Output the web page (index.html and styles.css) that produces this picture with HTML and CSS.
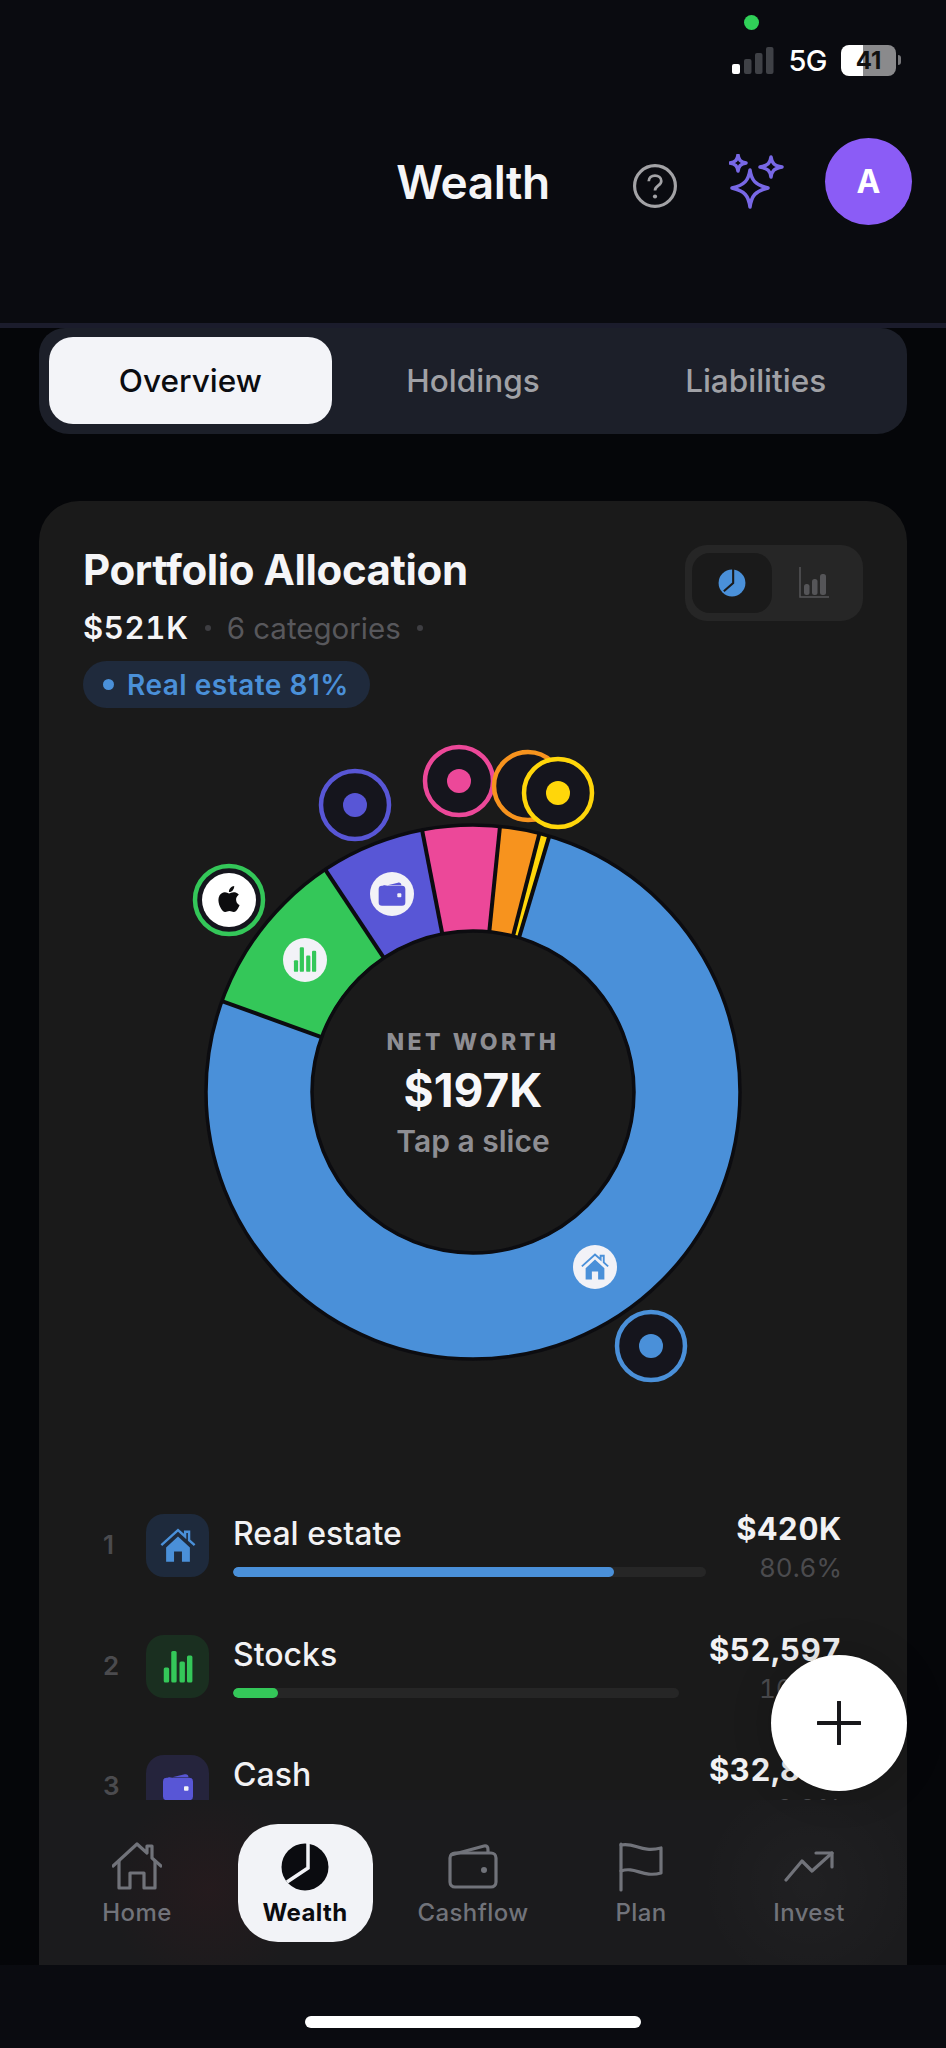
FILE: index.html
```html
<!DOCTYPE html>
<html lang="en">
<head>
    <meta charset="UTF-8">
    <meta name="viewport" content="width=device-width, initial-scale=1.0">
    <title>Wealth</title>
    <link rel="stylesheet" href="styles.css">
</head>
<body>
    <svg class="icon-defs" width="0" height="0" aria-hidden="true">
        <symbol id="i-house" viewBox="0 0 24 24">
            <path d="M1.500 11.500 12 2l4.500 4V3H19v5.300l3.500 3.200" fill="none" stroke="currentColor" stroke-width="1.500"/>
            <path d="M4.500 13 12 6l7.500 7v9h-5v-6.500h-5V22h-5z" fill="currentColor"/>
        </symbol>
        <symbol id="i-bars" viewBox="0 0 24 24">
            <rect x="2.500" y="13" width="3.600" height="10" rx="1" fill="currentColor"/>
            <rect x="7.500" y="2" width="3.600" height="21" rx="1" fill="currentColor"/>
            <rect x="13" y="9" width="3.600" height="14" rx="1" fill="currentColor"/>
            <rect x="18" y="5" width="3.600" height="18" rx="1" fill="currentColor"/>
        </symbol>
        <symbol id="i-wallet" viewBox="0 0 24 24">
            <path d="M4 6.500 16.500 3.500c1.500-.3 2.500.5 2.500 2H6z" fill="currentColor"/>
            <path d="M4.500 5.800h15a2.500 2.500 0 0 1 2.500 2.500v10a2.500 2.500 0 0 1-2.500 2.500h-15A2.500 2.500 0 0 1 2 18.300v-10a2.500 2.500 0 0 1 2.500-2.500z" fill="currentColor"/>
            <rect x="16" y="11.500" width="3" height="3" rx=".6" fill="#f2f2f7"/>
        </symbol>
        <symbol id="i-apple" viewBox="0 0 24 24">
            <path d="M12.152 6.896c-.948 0-2.415-1.078-3.96-1.04-2.04.027-3.91 1.183-4.961 3.014-2.117 3.675-.546 9.103 1.519 12.09 1.013 1.454 2.208 3.09 3.792 3.039 1.52-.065 2.09-.987 3.935-.987 1.831 0 2.35.987 3.96.948 1.637-.026 2.676-1.48 3.676-2.948 1.156-1.688 1.636-3.325 1.662-3.415-.039-.013-3.182-1.221-3.22-4.857-.026-3.04 2.48-4.494 2.597-4.559-1.429-2.09-3.623-2.324-4.39-2.376-2-.156-3.675 1.09-4.61 1.09zM15.53 3.83c.843-1.012 1.4-2.427 1.245-3.83-1.207.052-2.662.805-3.532 1.818-.78.896-1.454 2.338-1.273 3.714 1.338.104 2.715-.688 3.559-1.701" fill="currentColor"/>
        </symbol>
    </svg>

    <div class="top">
        <div class="status-bar">
            <span class="camera-dot"></span>
            <svg class="signal" width="42" height="27" viewBox="0 0 42 27">
                <rect x="0" y="17" width="8" height="10" rx="2" fill="#fff"/>
                <rect x="12" y="12" width="7.500" height="15" rx="2" fill="#3f4146"/>
                <rect x="23" y="6" width="7.500" height="21" rx="2" fill="#3f4146"/>
                <rect x="34" y="0" width="7.500" height="27" rx="2" fill="#3f4146"/>
            </svg>
            <span class="network">5G</span>
            <span class="battery">41</span>
        </div>
        <div class="app-header">
            <h1 class="page-title">Wealth</h1>
            <div class="header-actions">
                <svg class="help-icon" width="44" height="44" viewBox="0 0 42 42" fill="none">
                    <circle cx="21" cy="21" r="19.500" stroke="#a3a3a6" stroke-width="3"/>
                    <path d="M15 16.500c0-3.500 2.700-5.500 6-5.500s6 2.100 6 5.200c0 4.400-6 4.600-6 9" stroke="#a3a3a6" stroke-width="2.600"/>
                    <circle cx="21" cy="31" r="2" fill="#a3a3a6"/>
                </svg>
                <svg class="sparkles" width="56" height="56" viewBox="0 0 56 56" fill="none" stroke="#7868e6" stroke-width="3.500" stroke-linejoin="round">
                    <path d="M21 16c1.500 10 5 15 18 18-13 3-16.500 8-18 19-1.500-11-5-16-18-19 13-3 16.500-8 18-18z"/>
                    <path d="M9 1c.7 5 2.500 7 8 8-5.500 1-7.300 3-8 8-.7-5-2.500-7-8-8 5.500-1 7.300-3 8-8z"/>
                    <path d="M42 3c.8 6 3 8.500 11 10-8 1.500-10.200 4-11 10-.8-6-3-8.500-11-10 8-1.500 10.200-4 11-10z"/>
                </svg>
                <div class="avatar">A</div>
            </div>
        </div>
    </div>

    <div class="tabs">
        <div class="tab active">Overview</div>
        <div class="tab">Holdings</div>
        <div class="tab">Liabilities</div>
    </div>

    <div class="card">
        <div class="card-body">
            <div class="card-head">
                <div>
                    <h2 class="card-title">Portfolio Allocation</h2>
                    <div class="card-meta">
                        <strong>$521K</strong>
                        <span class="meta-dot"></span>
                        <span>6 categories</span>
                        <span class="meta-dot"></span>
                    </div>
                    <div class="top-pill"><span class="pill-dot"></span>Real estate 81%</div>
                </div>
                <div class="view-toggle">
                    <div class="toggle-btn active">
                        <svg width="28" height="28" viewBox="0 0 24 24">
                            <circle cx="12" cy="12" r="11.500" fill="#4a90d9"/>
                            <path d="M13 0V12L5 19" fill="none" stroke="#1a1a1a" stroke-width="1.800"/>
                        </svg>
                    </div>
                    <div class="toggle-btn">
                        <svg width="30" height="32" viewBox="0 0 30 32" fill="#555558">
                            <path d="M1 0v30h29" fill="none" stroke="#555558" stroke-width="1.500"/>
                            <rect x="5" y="17" width="5.500" height="11" rx="2.500"/>
                            <rect x="13" y="12" width="5.500" height="16" rx="2.500"/>
                            <rect x="21" y="7" width="6" height="21" rx="2.500"/>
                        </svg>
                    </div>
                </div>
            </div>

            <div class="chart">
                <svg class="donut" width="868" height="670" viewBox="39 730 868 670">
                    <g transform="translate(473 1092)">
                        <g transform="rotate(-90)" fill="none" stroke-width="105">
                            <circle class="slice-blue" r="214.500" pathLength="360" stroke-dasharray="273.300 360" transform="rotate(16.600)"/>
                            <circle class="slice-green" r="214.500" pathLength="360" stroke-dasharray="36.500 360" transform="rotate(289.900)"/>
                            <circle class="slice-indigo" r="214.500" pathLength="360" stroke-dasharray="22.600 360" transform="rotate(326.400)"/>
                            <circle class="slice-pink" r="214.500" pathLength="360" stroke-dasharray="16.800 360" transform="rotate(349)"/>
                            <circle class="slice-orange" r="214.500" pathLength="360" stroke-dasharray="8.600 360" transform="rotate(5.800)"/>
                            <circle class="slice-yellow" r="214.500" pathLength="360" stroke-dasharray="2.200 360" transform="rotate(14.400)"/>
                        </g>
                        <circle class="donut-edge" r="267"/>
                        <circle class="donut-edge" r="161"/>
                        <line class="donut-gap" y1="-162" y2="-267" transform="rotate(16.600)"/>
                        <line class="donut-gap" y1="-162" y2="-267" transform="rotate(14.400)"/>
                        <line class="donut-gap" y1="-162" y2="-267" transform="rotate(5.800)"/>
                        <line class="donut-gap" y1="-162" y2="-267" transform="rotate(-11)"/>
                        <line class="donut-gap" y1="-162" y2="-267" transform="rotate(-33.600)"/>
                        <line class="donut-gap" y1="-162" y2="-267" transform="rotate(-70.100)"/>
                    </g>

                    <circle class="slice-badge" cx="595" cy="1267" r="22"/>
                    <use class="fill-blue" href="#i-house" x="580" y="1252" width="30" height="30"/>
                    <circle class="slice-badge" cx="305" cy="960" r="22"/>
                    <use class="fill-green" href="#i-bars" x="291" y="945" width="28" height="28"/>
                    <circle class="slice-badge" cx="392" cy="894" r="22"/>
                    <use class="fill-indigo" href="#i-wallet" x="376" y="878" width="32" height="32"/>

                    <circle class="ring ring-blue" cx="651" cy="1346" r="34"/>
                    <circle class="fill-blue dot" cx="651" cy="1346" r="12"/>
                    <circle class="ring ring-indigo" cx="355" cy="805" r="34"/>
                    <circle class="fill-indigo dot" cx="355" cy="805" r="12"/>
                    <circle class="ring ring-green" cx="229" cy="900" r="34"/>
                    <circle class="apple-face" cx="229" cy="900" r="27"/>
                    <use class="fill-black" href="#i-apple" x="216" y="886" width="26" height="26"/>
                    <circle class="ring ring-pink" cx="459" cy="781" r="34"/>
                    <circle class="fill-pink dot" cx="459" cy="781" r="12"/>
                    <circle class="ring ring-orange" cx="528" cy="786" r="34"/>
                    <circle class="ring ring-yellow" cx="558" cy="793" r="34"/>
                    <circle class="fill-yellow dot" cx="558" cy="793" r="12"/>
                </svg>
                <div class="donut-center">
                    <div class="center-label">NET WORTH</div>
                    <div class="center-value">$197K</div>
                    <div class="center-hint">Tap a slice</div>
                </div>
            </div>

            <div class="alloc-list">
                <div class="alloc-row">
                    <span class="rank">1</span>
                    <div class="alloc-icon tint-blue">
                        <svg class="fill-blue" width="38" height="38"><use href="#i-house"/></svg>
                    </div>
                    <div class="alloc-main">
                        <div class="alloc-name">Real estate</div>
                        <div class="bar"><div class="bar-fill bg-blue" style="width: 80.6%"></div></div>
                    </div>
                    <div class="alloc-right">
                        <div class="alloc-value">$420K</div>
                        <div class="alloc-pct">80.6%</div>
                    </div>
                </div>
                <div class="alloc-row">
                    <span class="rank">2</span>
                    <div class="alloc-icon tint-green">
                        <svg class="fill-green" width="36" height="36"><use href="#i-bars"/></svg>
                    </div>
                    <div class="alloc-main">
                        <div class="alloc-name">Stocks</div>
                        <div class="bar"><div class="bar-fill bg-green" style="width: 10.1%"></div></div>
                    </div>
                    <div class="alloc-right">
                        <div class="alloc-value">$52,597</div>
                        <div class="alloc-pct">10.1%</div>
                    </div>
                </div>
                <div class="alloc-row">
                    <span class="rank">3</span>
                    <div class="alloc-icon tint-indigo">
                        <svg class="fill-indigo" width="36" height="36"><use href="#i-wallet"/></svg>
                    </div>
                    <div class="alloc-main">
                        <div class="alloc-name">Cash</div>
                        <div class="bar"><div class="bar-fill bg-indigo" style="width: 6.3%"></div></div>
                    </div>
                    <div class="alloc-right">
                        <div class="alloc-value">$32,847</div>
                        <div class="alloc-pct">6.3%</div>
                    </div>
                </div>
            </div>
        </div>

        <button class="fab" aria-label="Add">
            <svg width="44" height="44" viewBox="0 0 44 44"><path d="M22 1v42M1 22h42" stroke="#17171a" stroke-width="4" stroke-linecap="round"/></svg>
        </button>

        <nav class="bottom-nav">
            <div class="nav-item">
                <svg width="50" height="50" viewBox="0 0 50 50" fill="none" stroke="currentColor" stroke-width="3.200" stroke-linejoin="round" stroke-linecap="round">
                    <path d="M1 24 25 2l10 9V4h5v12l9 8"/>
                    <path d="M7 19v27h11V31h14v15h11V19"/>
                </svg>
                <span>Home</span>
            </div>
            <div class="nav-item active">
                <svg width="50" height="50" viewBox="0 0 50 50">
                    <circle cx="25" cy="25" r="23.500" fill="#0b0c10"/>
                    <path d="M28 0V26L7 40" fill="none" stroke="#f2f3f7" stroke-width="3.500"/>
                </svg>
                <span>Wealth</span>
            </div>
            <div class="nav-item">
                <svg width="50" height="50" viewBox="0 0 50 50" fill="none" stroke="currentColor" stroke-width="3.200" stroke-linejoin="round">
                    <path d="M3 13 36 4c3-.5 4 1 4 4v3"/>
                    <rect x="2" y="11" width="46" height="34" rx="5"/>
                    <circle cx="36" cy="28" r="3" fill="currentColor" stroke="none"/>
                </svg>
                <span>Cashflow</span>
            </div>
            <div class="nav-item">
                <svg width="50" height="50" viewBox="0 0 50 50" fill="none" stroke="currentColor" stroke-width="3.200" stroke-linecap="round" stroke-linejoin="round">
                    <path d="M5 2v46"/>
                    <path d="M5 3c14-3 20 8 40 3v25c-18 5-26-7-40-2"/>
                </svg>
                <span>Plan</span>
            </div>
            <div class="nav-item">
                <svg width="50" height="50" viewBox="0 0 50 50" fill="none" stroke="currentColor" stroke-width="3.200" stroke-linecap="round" stroke-linejoin="round">
                    <path d="M2 38 18 19l10 10L48 11"/>
                    <path d="M32 11h16v14"/>
                </svg>
                <span>Invest</span>
            </div>
        </nav>
    </div>

    <div class="home-area">
        <div class="home-bar"></div>
    </div>
</body>
</html>
```

FILE: styles.css
```css
* {
    box-sizing: border-box;
    margin: 0;
    padding: 0;
}
html, body {
    width: 946px;
    height: 2048px;
    overflow: hidden;
}
body {
    font-family: Inter, "Liberation Sans", sans-serif;
    background-color: #050609;
    color: #f5f5f7;
    display: flex;
    flex-direction: column;
}
.icon-defs {
    position: absolute;
}

/* top */
.top {
    height: 328px;
    flex-shrink: 0;
    background: #0a0b10;
    border-bottom: 5px solid #1b1c2c;
}
.status-bar {
    position: relative;
    height: 84px;
    padding: 36px 50px 0 0;
    display: flex;
    justify-content: flex-end;
    align-items: center;
    gap: 14px;
}
.camera-dot {
    position: absolute;
    top: 15px;
    left: 744px;
    width: 15px;
    height: 15px;
    border-radius: 50%;
    background: #30d158;
}
.network {
    font-size: 29px;
    font-weight: 500;
    letter-spacing: -0.5px;
    color: #fff;
}
.battery {
    position: relative;
    width: 55px;
    height: 31px;
    border-radius: 8px;
    background: linear-gradient(90deg, #fff 40%, #8a8a8c 40%);
    color: #111;
    font-size: 24px;
    font-weight: 700;
    line-height: 31px;
    text-align: center;
}
.battery::after {
    content: "";
    position: absolute;
    right: -5px;
    top: 10px;
    width: 3px;
    height: 10px;
    border-radius: 0 3px 3px 0;
    background: #77777a;
}
.app-header {
    display: grid;
    grid-template-columns: 1fr auto 1fr;
    align-items: center;
    margin-top: 54px;
    height: 87px;
}
.page-title {
    grid-column: 2;
    font-size: 46px;
    font-weight: 600;
    letter-spacing: -0.4px;
}
.header-actions {
    grid-column: 3;
    display: flex;
    align-items: center;
    justify-content: flex-end;
    gap: 44px;
    padding-right: 34px;
}
.help-icon {
    margin-top: 8px;
    margin-right: 8px;
}
.avatar {
    width: 87px;
    height: 87px;
    border-radius: 50%;
    background: #8b5cf6;
    color: #fff;
    font-size: 32px;
    font-weight: 700;
    line-height: 87px;
    text-align: center;
}
.sparkles {
    margin-right: -4px;
}

/* tabs */
.tabs {
    flex-shrink: 0;
    margin: 0 39px;
    height: 106px;
    padding: 9px 10px 10px;
    display: grid;
    grid-template-columns: repeat(3, 1fr);
    background: #1c1f29;
    border-radius: 26px 26px 30px 30px;
}
.tab {
    display: flex;
    align-items: center;
    justify-content: center;
    border-radius: 24px;
    font-size: 31.500px;
    font-weight: 500;
    color: #a0a1a6;
}
.tab.active {
    background: #f3f4f8;
    color: #0b0c10;
}

/* card */
.card {
    position: relative;
    flex: 1;
    min-height: 0;
    margin: 67px 39px 0;
    background: #1a1a1a;
    border-radius: 40px 40px 0 0;
    display: flex;
    flex-direction: column;
}
.card-body {
    flex: 1;
    min-height: 0;
    overflow: hidden;
}
.card-head {
    display: flex;
    justify-content: space-between;
    align-items: flex-start;
    padding: 44px 44px 0 44px;
}
.card-title {
    font-size: 42px;
    font-weight: 700;
    line-height: 50px;
    letter-spacing: -0.4px;
    color: #f5f5f7;
}
.card-meta {
    display: flex;
    align-items: center;
    gap: 16px;
    margin-top: 15px;
    font-size: 29.500px;
    line-height: 36px;
    color: #58585c;
}
.card-meta strong {
    font-size: 31px;
    font-weight: 600;
    font-variant-numeric: tabular-nums;
    color: #f5f5f7;
    letter-spacing: 0.7px;
}
.meta-dot {
    width: 6px;
    height: 6px;
    border-radius: 50%;
    background: #3e3e42;
}
.top-pill {
    display: inline-flex;
    align-items: center;
    gap: 13px;
    margin-top: 15px;
    height: 47px;
    padding: 0 21px 0 20px;
    border-radius: 24px;
    background: #1f2a3c;
    color: #4a90d9;
    font-size: 28px;
    font-weight: 600;
    letter-spacing: 0.5px;
}
.pill-dot {
    width: 11px;
    height: 11px;
    border-radius: 50%;
    background: #4a90d9;
}
.view-toggle {
    display: flex;
    width: 178px;
    height: 76px;
    padding: 8px 7px;
    border-radius: 22px;
    background: #262626;
}
.toggle-btn {
    flex: 1;
    display: flex;
    align-items: center;
    justify-content: center;
    border-radius: 18px;
}
.toggle-btn.active {
    flex: 0 0 80px;
    background: #1a1a1a;
}

/* donut */
.chart {
    position: relative;
    margin-top: 22px;
    height: 670px;
    margin-bottom: 114px;
}
.donut {
    display: block;
}
.slice-blue { stroke: #4a90d9; }
.slice-green { stroke: #34c759; }
.slice-indigo { stroke: #5856d6; }
.slice-pink { stroke: #ec4899; }
.slice-orange { stroke: #f7931e; }
.slice-yellow { stroke: #ffd60a; }
.donut-edge {
    fill: none;
    stroke: #0c0c10;
    stroke-width: 3.500;
}
.donut-gap {
    stroke: #0c0c10;
    stroke-width: 4;
}
.slice-badge {
    fill: #f2f2f7;
}
.fill-blue { color: #4a90d9; fill: #4a90d9; }
.fill-green { color: #34c759; fill: #34c759; }
.fill-indigo { color: #5856d6; fill: #5856d6; }
.fill-pink { fill: #ec4899; }
.fill-yellow { fill: #ffd60a; }
.fill-black { color: #0c0c0e; }
.ring {
    fill: #15151d;
    stroke-width: 4.500;
}
.ring-blue { stroke: #4a90d9; }
.ring-green { stroke: #34c759; }
.ring-indigo { stroke: #5856d6; }
.ring-pink { stroke: #ec4899; }
.ring-orange { stroke: #f7931e; }
.ring-yellow { stroke: #ffd60a; }
.apple-face {
    fill: #fff;
}
.donut-center {
    position: absolute;
    left: 284px;
    top: 298px;
    width: 300px;
    height: 140px;
    display: flex;
    flex-direction: column;
    align-items: center;
    text-align: center;
}
.center-label {
    font-size: 23px;
    font-weight: 800;
    line-height: 28px;
    letter-spacing: 3.500px;
    color: #8e8e93;
}
.center-value {
    margin-top: 8px;
    font-size: 46px;
    font-weight: 700;
    line-height: 52px;
    color: #f7f7f9;
}
.center-hint {
    margin-top: 7px;
    font-size: 30px;
    font-weight: 600;
    line-height: 36px;
    color: #8e8e93;
}

/* list */
.alloc-list {
    padding: 0 65px 0 64px;
}
.alloc-row {
    display: flex;
    align-items: flex-start;
    height: 120.670px;
}
.rank {
    width: 43px;
    padding-top: 15px;
    font-size: 26px;
    font-weight: 600;
    line-height: 32px;
    color: #4b4b4e;
}
.alloc-icon {
    flex-shrink: 0;
    display: flex;
    align-items: center;
    justify-content: center;
    width: 63px;
    height: 63px;
    border-radius: 18px;
}
.tint-blue { background: #1e2a3c; }
.tint-green { background: #1a2f20; }
.tint-indigo { background: #25243c; }
.alloc-main {
    flex: 1;
    min-width: 0;
    margin-left: 24px;
}
.alloc-name {
    font-size: 32px;
    font-weight: 500;
    line-height: 40px;
    color: #f2f2f4;
}
.bar {
    margin-top: 13px;
    height: 10px;
    border-radius: 5px;
    background: #262626;
    overflow: hidden;
}
.bar-fill {
    height: 100%;
    border-radius: 5px;
}
.bg-blue { background: #4a90d9; }
.bg-green { background: #34c759; }
.bg-indigo { background: #5856d6; }
.alloc-right {
    flex-shrink: 0;
    margin-left: 30px;
    text-align: right;
    font-variant-numeric: tabular-nums;
}
.alloc-value {
    margin-top: -5px;
    font-size: 31px;
    font-weight: 700;
    line-height: 40px;
    letter-spacing: 0.6px;
    color: #f2f2f4;
}
.alloc-pct {
    margin-top: 4px;
    font-size: 26px;
    line-height: 30px;
    color: #4b4b4e;
}

/* fab */
.fab {
    position: absolute;
    right: 0;
    bottom: 174px;
    width: 136px;
    height: 136px;
    border: none;
    border-radius: 50%;
    background: #fff;
    display: flex;
    align-items: center;
    justify-content: center;
    box-shadow: 0 0 40px rgba(0, 0, 0, 0.2);
}

/* bottom nav */
.bottom-nav {
    flex-shrink: 0;
    display: grid;
    grid-template-columns: repeat(5, 1fr);
    height: 165px;
    padding: 24px 14px 23px;
    background:
        radial-gradient(circle at 170px 90px, rgba(70, 25, 30, 0.22), transparent 100px),
        radial-gradient(circle at 770px 85px, rgba(255, 255, 255, 0.025), transparent 110px),
        #1b1b1d;
}
.nav-item {
    justify-self: center;
    width: 135px;
    display: flex;
    flex-direction: column;
    align-items: center;
    padding-top: 18px;
    gap: 6px;
    border-radius: 40px;
    color: #71737a;
    font-size: 24px;
    font-weight: 500;
    letter-spacing: 0.4px;
}
.nav-item.active {
    background: #f2f3f7;
    color: #0b0c10;
    font-weight: 700;
}

/* home indicator */
.home-area {
    flex-shrink: 0;
    height: 83px;
    background: #0a0b10;
    padding-top: 51px;
    display: flex;
    justify-content: center;
}
.home-bar {
    width: 336px;
    height: 12px;
    border-radius: 6px;
    background: #fff;
}
```
